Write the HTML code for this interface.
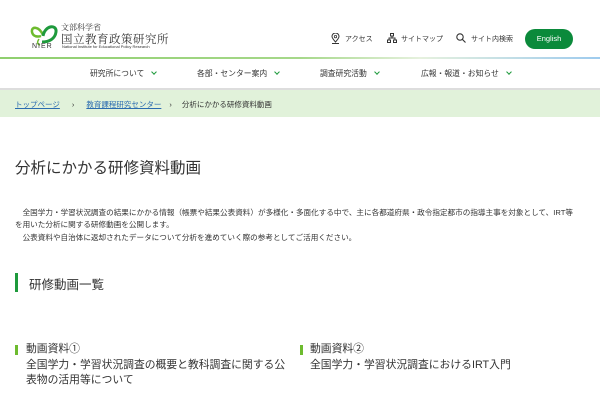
<!DOCTYPE html>
<html><head><meta charset="utf-8"><style>
*{margin:0;padding:0;box-sizing:border-box}
body{width:600px;height:400px;overflow:hidden;background:#fff;font-family:"Liberation Sans","Noto Sans CJK JP",sans-serif;color:#333;position:relative}
.a{position:absolute;white-space:nowrap}
.cv{display:inline-block;width:4px;height:4px;border-right:1px solid #1e9a3c;border-bottom:1px solid #1e9a3c;transform:rotate(45deg);margin-left:8px;position:relative;top:-2px}
</style></head><body>
<svg class="a" style="left:29px;top:22px" width="30" height="28" viewBox="0 0 30 28">
<path d="M14 13 C10 4 2 4 3 10 C4 15 9 15 12 14" fill="none" stroke="#6dbb2e" stroke-width="2.5"/>
<path d="M14 14 C16 3 28 2 27 10 C26 17 20 20 13 20" fill="none" stroke="#1e9a3c" stroke-width="3"/>
<path d="M10 17 C8 20 8 22 11 23" fill="none" stroke="#6dbb2e" stroke-width="1.5"/>
</svg>
<div class="a" style="left:32px;top:43px;font-size:7px;letter-spacing:1px;color:#333">NIER</div>
<div class="a" style="left:61px;top:22px;font-size:8px;color:#333;font-family:'Noto Serif CJK SC',serif">文部科学省</div>
<div class="a" style="left:61px;top:31px;font-size:11.5px;color:#333;letter-spacing:0.5px;font-family:'Noto Serif CJK SC',serif">国立教育政策研究所</div>
<div class="a" style="left:62px;top:44px;font-size:4px;color:#333">National Institute for Educational Policy Research</div>
<svg class="a" style="left:331px;top:33px" width="9" height="11" viewBox="0 0 9 11"><path d="M4.5 9 C1 5 1 4 1 3.5 A3.5 3.5 0 0 1 8 3.5 C8 4 8 5 4.5 9Z" fill="none" stroke="#333" stroke-width="1"/><circle cx="4.5" cy="3.6" r="1.2" fill="none" stroke="#333" stroke-width=".8"/><path d="M1 10.5H8" stroke="#333"/></svg>
<div class="a" style="left:345px;top:34px;font-size:7px">アクセス</div>
<svg class="a" style="left:387px;top:33px" width="10" height="10" viewBox="0 0 10 10" fill="none" stroke="#333" stroke-width="1"><rect x="3.5" y="0.5" width="3" height="2.5"/><rect x="0.5" y="7" width="3" height="2.5"/><rect x="6.5" y="7" width="3" height="2.5"/><path d="M5 3V5M2 7V5H8V7"/></svg>
<div class="a" style="left:401px;top:34px;font-size:7px">サイトマップ</div>
<svg class="a" style="left:456px;top:33px" width="10" height="10" viewBox="0 0 10 10" fill="none" stroke="#333" stroke-width="1.1"><circle cx="4" cy="4" r="3.2"/><path d="M6.3 6.3L9.5 9.5"/></svg>
<div class="a" style="left:471px;top:34px;font-size:7px">サイト内検索</div>
<div class="a" style="left:525px;top:29px;width:48px;height:20px;border-radius:10px;background:#0b8a3b;color:#fff;font-size:7.5px;text-align:center;line-height:20px">English</div>
<div class="a" style="left:0;top:57px;width:600px;height:2px;background:linear-gradient(90deg,#8fcf6e,#a6d88a 50%,#e6f1de 70%,#9ecbee)"></div>
<div class="a" style="left:90px;top:68px;font-size:7.8px">研究所について<span class="cv"></span></div>
<div class="a" style="left:197px;top:68px;font-size:7.8px">各部・センター案内<span class="cv"></span></div>
<div class="a" style="left:320px;top:68px;font-size:7.8px">調査研究活動<span class="cv"></span></div>
<div class="a" style="left:421px;top:68px;font-size:7.8px">広報・報道・お知らせ<span class="cv"></span></div>
<div class="a" style="left:0;top:88px;width:600px;height:2px;background:#ddd"></div>
<div class="a" style="left:0;top:90px;width:600px;height:27px;background:#e1f2da"></div>
<div class="a" style="left:15px;top:99px;font-size:7.5px;color:#2b6cb0"><span style="text-decoration:underline">トップページ</span><span style="color:#333;margin:0 12px 0 12px">›</span><span style="text-decoration:underline">教育課程研究センター</span><span style="color:#333;margin:0 10px 0 8px">›</span><span style="color:#333">分析にかかる研修資料動画</span></div>
<div class="a" style="left:15px;top:156px;font-size:15.5px;color:#333">分析にかかる研修資料動画</div>
<div class="a" style="left:15px;top:207px;font-size:7.6px;line-height:12.3px;color:#333">　全国学力・学習状況調査の結果にかかる情報（帳票や結果公表資料）が多様化・多面化する中で、主に各都道府県・政令指定都市の指導主事を対象として、IRT等<br>を用いた分析に関する研修動画を公開します。<br>　公表資料や自治体に返却されたデータについて分析を進めていく際の参考としてご活用ください。</div>
<div class="a" style="left:15px;top:273px;width:3px;height:19px;background:#1e9a3c"></div>
<div class="a" style="left:29px;top:274px;font-size:12.5px;color:#333">研修動画一覧</div>
<div class="a" style="left:15px;top:345px;width:3px;height:10px;background:#6dbb2e"></div>
<div class="a" style="left:26px;top:342px;font-size:10.8px;line-height:15.5px;color:#333">動画資料①<br>全国学力・学習状況調査の概要と教科調査に関する公<br>表物の活用等について</div>
<div class="a" style="left:300px;top:345px;width:3px;height:10px;background:#6dbb2e"></div>
<div class="a" style="left:310px;top:342px;font-size:10.8px;line-height:15.5px;color:#333">動画資料②<br>全国学力・学習状況調査におけるIRT入門</div>
</body></html>
